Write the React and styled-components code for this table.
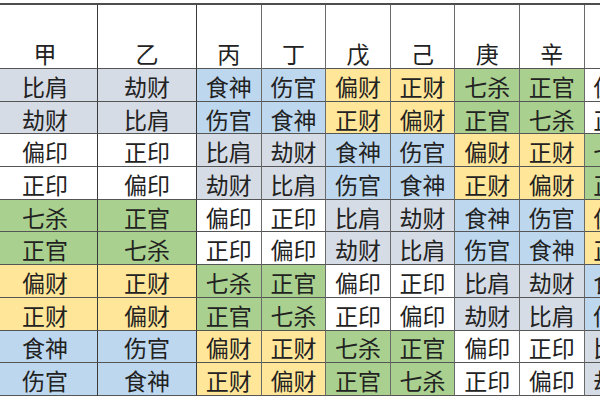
import React from "react";
import styled, { createGlobalStyle } from "styled-components";

const Global = createGlobalStyle`
  html, body { margin: 0; padding: 0; background: #ffffff; }
  body { width: 600px; height: 400px; overflow: hidden; }
  #root { width: 600px; height: 400px; overflow: hidden; }
`;

const STEMS = ["甲", "乙", "丙", "丁", "戊", "己", "庚", "辛", "壬"];

const ROWS = [
  ["比肩", "劫财", "食神", "伤官", "偏财", "正财", "七杀", "正官", "偏印"],
  ["劫财", "比肩", "伤官", "食神", "正财", "偏财", "正官", "七杀", "正印"],
  ["偏印", "正印", "比肩", "劫财", "食神", "伤官", "偏财", "正财", "七杀"],
  ["正印", "偏印", "劫财", "比肩", "伤官", "食神", "正财", "偏财", "正官"],
  ["七杀", "正官", "偏印", "正印", "比肩", "劫财", "食神", "伤官", "偏财"],
  ["正官", "七杀", "正印", "偏印", "劫财", "比肩", "伤官", "食神", "正财"],
  ["偏财", "正财", "七杀", "正官", "偏印", "正印", "比肩", "劫财", "食神"],
  ["正财", "偏财", "正官", "七杀", "正印", "偏印", "劫财", "比肩", "伤官"],
  ["食神", "伤官", "偏财", "正财", "七杀", "正官", "偏印", "正印", "比肩"],
  ["伤官", "食神", "正财", "偏财", "正官", "七杀", "正印", "偏印", "劫财"],
];

const TONE = {
  比肩: "#d6dce5",
  劫财: "#d6dce5",
  食神: "#bdd7ee",
  伤官: "#bdd7ee",
  偏财: "#ffe699",
  正财: "#ffe699",
  七杀: "#a9d08e",
  正官: "#a9d08e",
  偏印: "#ffffff",
  正印: "#ffffff",
};

const Page = styled.div`
  width: 600px;
  height: 400px;
  overflow: hidden;
  background: #ffffff;
  padding-top: 3px;
  box-sizing: border-box;
`;

const Grid = styled.div`
  display: grid;
  grid-template-columns: 105px 99px repeat(7, 64.6px);
  grid-template-rows: 64px;
  grid-auto-rows: 32.7px;
  margin-left: -7px;
  width: max-content;
  border-top: 2px solid #4d4d4d;
  font-family: "Noto Sans CJK SC", "Noto Sans", sans-serif;
  font-size: 23px;
  color: #222222;
`;

const Cell = styled.div`
  box-sizing: border-box;
  display: flex;
  justify-content: center;
  align-items: center;
  background: ${(p) => p.$bg || "#ffffff"};
  border-right: 1px solid ${(p) => (p.$strong ? "#3a3a3a" : "#6a6a6a")};
  border-bottom: 1px solid #555555;
  line-height: 1;
  padding-top: 3px;
  white-space: nowrap;
`;

const HeadCell = styled(Cell)`
  align-items: flex-end;
  padding-top: 0;
  padding-bottom: 3px;
`;

export default function App() {
  return (
    <>
      <Global />
      <Page>
        <Grid>
          {STEMS.map((s, i) => (
            <HeadCell key={s} $strong={i < 2}>
              {s}
            </HeadCell>
          ))}
          {ROWS.map((row, r) =>
            row.map((v, c) => (
              <Cell key={`${r}-${c}`} $bg={TONE[v]} $strong={c < 2}>
                {v}
              </Cell>
            ))
          )}
        </Grid>
      </Page>
    </>
  );
}
